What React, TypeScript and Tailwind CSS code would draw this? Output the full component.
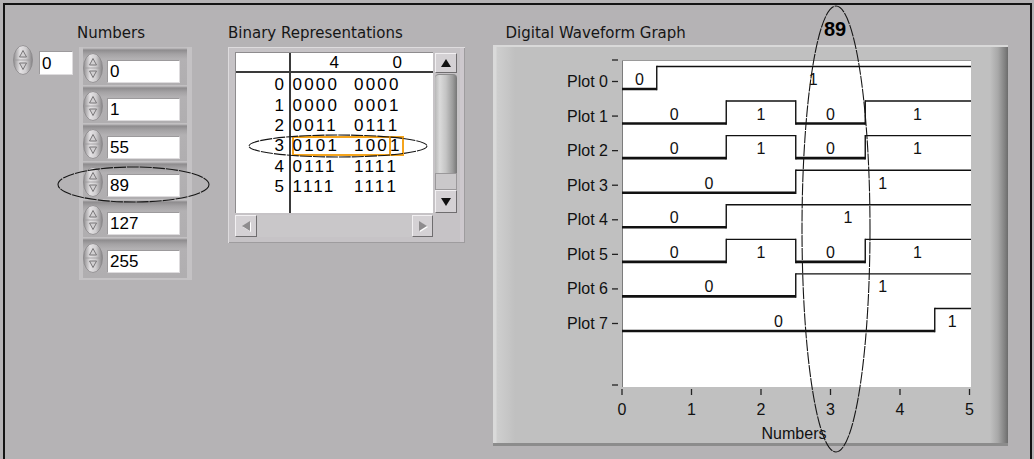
import React, { useId } from 'react';

const NUMBERS = [0, 1, 55, 89, 127, 255];

const bit = (n: number, k: number) => (n >> k) & 1;
const toBits = (n: number) => {
  const s = n.toString(2).padStart(8, '0');
  return [s.slice(0, 4), s.slice(4)];
};

// graph geometry, relative to the graph frame
const PX = 129;
const PY = 15;
const PW = 349;
const PH = 327;
const UNIT = 69.5;
const ROW = 34.57;
const xAt = (t: number) => PX + t * UNIT;
const lowY = (k: number) => 44 + ROW * k;

const label = "font-['DejaVu_Sans',sans-serif] text-[15px] text-[#161616] whitespace-nowrap";
const digits = "font-['Liberation_Sans',Arial,sans-serif] text-black";

const Spinner: React.FC = () => {
  const id = useId().replace(/[^a-zA-Z0-9]/g, '');
  return (
    <svg width="20" height="30" viewBox="0 0 20 30" className="block shrink-0">
      <defs>
        <linearGradient id={`${id}g`} x1="0" x2="1" y1="0" y2="0">
          <stop offset="0" stopColor="#8f8d8f" />
          <stop offset="0.35" stopColor="#e4e2e4" />
          <stop offset="0.65" stopColor="#d0ced0" />
          <stop offset="1" stopColor="#858385" />
        </linearGradient>
      </defs>
      <ellipse cx="10" cy="15" rx="9.5" ry="14.5" fill={`url(#${id}g)`} stroke="#8a888a" strokeWidth="0.8" />
      <line x1="1.5" y1="15" x2="18.5" y2="15" stroke="#9c9a9c" strokeWidth="0.8" />
      <path d="M6.5 12 L10 5.5 L13.5 12 Z" fill="#d2d0d2" stroke="#6e6c6e" strokeWidth="0.9" strokeLinejoin="round" />
      <path d="M6.5 18 L10 24.5 L13.5 18 Z" fill="#d2d0d2" stroke="#6e6c6e" strokeWidth="0.9" strokeLinejoin="round" />
    </svg>
  );
};

const NumBox: React.FC<{ value: number; className: string }> = ({ value, className }) => (
  <div
    className={`bg-white border border-[#9c9a9c] border-r-[#dedcde] border-b-[#dedcde] flex items-center pl-[2px] text-[17px] leading-none ${digits} ${className}`}
  >
    {value}
  </div>
);

const Tri: React.FC<{ dir: 'up' | 'down' | 'left' | 'right'; color: string; className?: string }> = ({ dir, color, className }) => {
  const vertical = dir === 'up' || dir === 'down';
  const d = {
    up: 'M1 9 L6 1 L11 9 Z',
    down: 'M1 1 L6 9 L11 1 Z',
    left: 'M9 1 L1 6 L9 11 Z',
    right: 'M1 1 L9 6 L1 11 Z',
  }[dir];
  return (
    <svg width={vertical ? 12 : 10} height={vertical ? 10 : 12} viewBox={vertical ? '0 0 12 10' : '0 0 10 12'} className={className}>
      <path d={d} fill={color} />
    </svg>
  );
};

const scrollBtn =
  'bg-[#d4d1d4] border border-t-[#f2f0f2] border-l-[#f2f0f2] border-r-[#6f6d6f] border-b-[#6f6d6f] flex items-center justify-center';

const BinaryTable: React.FC = () => (
  <div className="mt-[5px] w-[237px] h-[196px] bg-[#c6c3c6] pt-[5px] pl-[7px] shadow-[inset_1px_1px_0_#dedcde,inset_-1px_-1px_0_#9e9c9e,inset_-5px_0_0_#cdc8cd]">
    <div className="flex items-start">
      <div className={`w-[198px] h-[161px] bg-white border-t border-l border-[#8e8c8e] flex ${digits} text-[17px] leading-none`}>
        <div className="w-[55px] h-full border-r-2 border-[#3a3a3a] flex flex-col">
          <div className="h-[20px] shrink-0 border-b-2 border-[#3a3a3a]" />
          <div className="pt-[1.5px]">
            {NUMBERS.map((_, i) => (
              <div key={i} className="h-[20.4px] flex items-center justify-end pr-[5px]">
                {i}
              </div>
            ))}
          </div>
        </div>
        <div className="flex-1 flex flex-col">
          <div className="h-[20px] shrink-0 border-b-2 border-[#3a3a3a] flex items-center">
            <span className="w-[48px] text-right">4</span>
            <span className="w-[63px] text-right">0</span>
          </div>
          <div className="pt-[1.5px]">
            {NUMBERS.map((n, i) => {
              const [hi, lo] = toBits(n);
              const sel = i === 3;
              return (
                <div key={i} className="h-[20.4px] flex items-stretch">
                  <div
                    className={`ml-[1px] w-[112px] flex items-center tracking-[2.2px] ${
                      sel ? 'shadow-[inset_0_0_0_2px_#f5a41c]' : ''
                    }`}
                  >
                    <span className="w-[62px] pl-[0.5px]">{hi}</span>
                    <span>{lo.slice(0, 3)}</span>
                    {sel ? (
                      <span className="h-full flex items-center pl-[1px] shadow-[inset_2px_0_0_#f5a41c]">{lo.slice(3)}</span>
                    ) : (
                      <span>{lo.slice(3)}</span>
                    )}
                  </div>
                </div>
              );
            })}
          </div>
        </div>
      </div>
      <div className="ml-[2px] mt-[1px] w-[22px] h-[160px] flex flex-col">
        <div className={`h-[20px] ${scrollBtn}`}>
          <Tri dir="up" color="#111" />
        </div>
        <div className="h-[1px]" />
        <div className="h-[99px] rounded-t-[4px] border-t border-[#8a8a8a] bg-[linear-gradient(90deg,#b8b8b8_0,#dadada_22%,#c4c4c4_50%,#9c9c9c_80%,#767676_100%)]" />
        <div className="h-[17px] bg-[#cac8ca] border border-[#9a989a]" />
        <div className={`h-[23px] ${scrollBtn}`}>
          <Tri dir="down" color="#111" />
        </div>
      </div>
    </div>
    <div className="mt-[2px] w-[198px] h-[22px] flex">
      <div className={`w-[22px] ${scrollBtn}`}>
        <Tri dir="left" color="#8e8c8e" className="drop-shadow-[1px_1px_0_#ffffff]" />
      </div>
      <div className="flex-1 bg-[#c9c7c9]" />
      <div className={`w-[21px] ${scrollBtn}`}>
        <Tri dir="right" color="#8e8c8e" className="drop-shadow-[1px_1px_0_#ffffff]" />
      </div>
    </div>
  </div>
);

const Waveform: React.FC<{ k: number }> = ({ k }) => {
  const vals = NUMBERS.map((n) => bit(n, k));
  const low = lowY(k);
  const high = low - 22.5;
  const runs: { v: number; a: number; b: number }[] = [];
  vals.forEach((v, i) => {
    const a = Math.max(0, i - 0.5);
    const b = i === vals.length - 1 ? PW / UNIT : i + 0.5;
    const last = runs[runs.length - 1];
    if (last && last.v === v) last.b = b;
    else runs.push({ v, a, b });
  });
  return (
    <g>
      {runs.map((r, j) => {
        const y = r.v ? high : low;
        const end = Math.min(r.b, 5);
        return (
          <g key={j}>
            <line x1={xAt(r.a)} x2={xAt(r.b)} y1={y} y2={y} stroke="#111" strokeWidth={r.v ? 1.4 : 2.6} />
            {j > 0 && <line x1={xAt(r.a)} x2={xAt(r.a)} y1={high - 0.7} y2={low + 1.3} stroke="#111" strokeWidth={1.4} />}
            <text x={xAt((r.a + end) / 2)} y={low - 4} textAnchor="middle">
              {r.v}
            </text>
          </g>
        );
      })}
    </g>
  );
};

const GraphChart: React.FC = () => (
  <svg width="515" height="401" className="block" fontFamily="'Liberation Sans', Arial, sans-serif" fontSize="16" fill="#111">
    <rect x={PX} y={PY} width={PW} height={PH} fill="#fff" />
    <line x1={PX + 0.5} y1={PY} x2={PX + 0.5} y2={PY + PH} stroke="#7c7c7c" />
    <line x1={PX} y1={PY + 0.5} x2={PX + PW} y2={PY + 0.5} stroke="#9a9a9a" />

    {/* y axis */}
    <line x1={119} x2={125} y1={PY} y2={PY} stroke="#222" strokeWidth={1.3} />
    <line x1={119} x2={125} y1={340} y2={340} stroke="#222" strokeWidth={1.3} />
    {Array.from({ length: 8 }, (_, k) => {
      const c = lowY(k) - 7.5;
      return (
        <g key={k}>
          <text x={115} y={lowY(k) - 2} textAnchor="end">
            Plot {k}
          </text>
          <line x1={119} x2={125} y1={c} y2={c} stroke="#222" strokeWidth={1.3} />
        </g>
      );
    })}

    {/* x axis */}
    {[0, 1, 2, 3, 4, 5].map((t) => (
      <g key={t}>
        <line x1={xAt(t)} x2={xAt(t)} y1={344} y2={350} stroke="#222" strokeWidth={1.3} />
        <text x={xAt(t)} y={370} textAnchor="middle">
          {t}
        </text>
      </g>
    ))}
    <text x={301} y={394} textAnchor="middle">
      Numbers
    </text>

    {Array.from({ length: 8 }, (_, k) => (
      <Waveform key={k} k={k} />
    ))}
  </svg>
);

const Annotations: React.FC = () => (
  <svg className="absolute inset-0 pointer-events-none" width="1034" height="459">
    <g fill="none" stroke="#161616" strokeWidth="1.1" strokeDasharray="12 1">
      <ellipse cx="133.5" cy="184.5" rx="75.5" ry="17.5" />
      <ellipse cx="338" cy="146" rx="89" ry="11" />
      <ellipse cx="836" cy="229" rx="34" ry="223" />
    </g>
    <text x="835" y="36" textAnchor="middle" fontWeight="bold" fontSize="20" fontFamily="'Liberation Sans', Arial, sans-serif">
      89
    </text>
  </svg>
);

export default function App() {
  return (
    <div className="relative w-[1034px] h-[459px] overflow-hidden bg-[#b5b3b5] pt-[3px] pl-[3px]">
      <div className="h-[456px] w-[1029px] border-t-2 border-l-2 border-r-2 border-[#141414] flex items-start">
        {/* Numbers */}
        <div className="pt-[40px] pl-[8px] flex items-start">
          <Spinner />
          <NumBox value={0} className="ml-[6px] mt-[6px] w-[34px] h-[24px]" />
        </div>
        <div className="ml-[6px] pt-[19px] flex flex-col">
          <div className={`h-[18px] leading-[18px] -ml-[2px] ${label}`}>Numbers</div>
          <div className="mt-[5px] w-[113px] border-l-4 border-r-[5px] border-b-2 border-[#c4c2c4] pb-[3px] bg-[#b0aeb0]">
            {NUMBERS.map((n) => (
              <div
                key={n}
                className="h-[38px] pt-[6px] pr-[7px] flex items-start bg-[linear-gradient(180deg,#c2c0c2_0,#c2c0c2_1px,#8e8c8e_3px,#a4a2a4_7px,#b3b1b3_12px,#b0aeb0_100%)]"
              >
                <Spinner />
                <NumBox value={n} className="ml-[4px] mt-[7px] w-[73px] h-[23px]" />
              </div>
            ))}
          </div>
        </div>

        {/* Binary Representations */}
        <div className="ml-[36px] pt-[19px] flex flex-col">
          <div className={`h-[18px] leading-[18px] ${label}`}>Binary Representations</div>
          <BinaryTable />
        </div>

        {/* Digital Waveform Graph */}
        <div className="ml-[28px] pt-[19px] flex flex-col">
          <div className={`h-[18px] leading-[18px] pl-[12.5px] ${label}`}>Digital Waveform Graph</div>
          <div className="mt-[3px] w-[515px] h-[401px] bg-[linear-gradient(90deg,#dadada_0,#dadada_3px,#cecece_4px,#c6c6c6_15px,#c0c0c0_22px,#c0c0c0_497px,#a8a8a8_505px,#808080_512px,#6c6c6c_515px)] shadow-[inset_0_2px_0_#d9d9d9,inset_0_-3px_0_#8c8c8c]">
            <GraphChart />
          </div>
        </div>
      </div>
      <Annotations />
    </div>
  );
}
